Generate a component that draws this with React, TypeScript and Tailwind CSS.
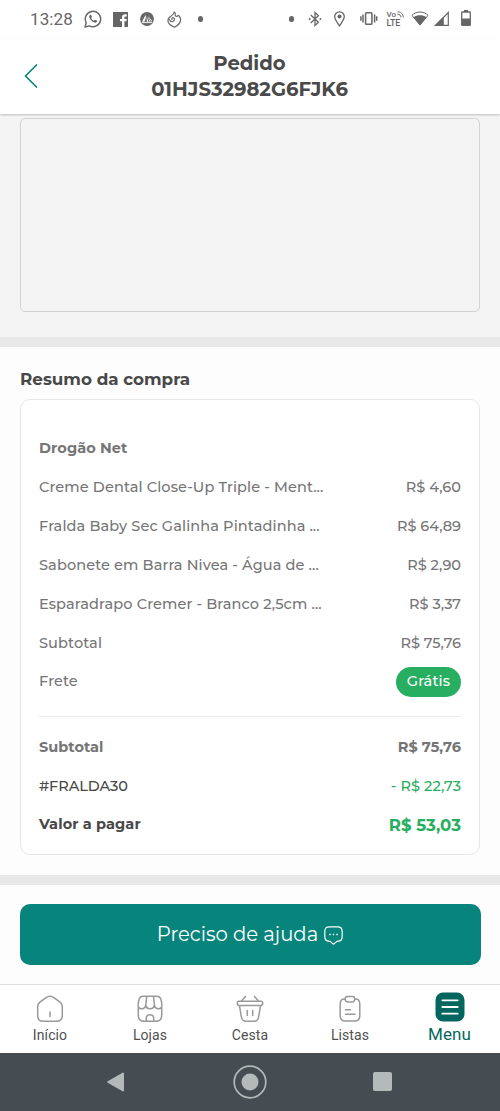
import type { ReactNode } from 'react';
import clsx from 'clsx';

interface OrderItem {
  name: string;
  price: string;
}

const items: OrderItem[] = [
  { name: 'Creme Dental Close-Up Triple - Ment...', price: 'R$ 4,60' },
  { name: 'Fralda Baby Sec Galinha Pintadinha ...', price: 'R$ 64,89' },
  { name: 'Sabonete em Barra Nivea - Água de ...', price: 'R$ 2,90' },
  { name: 'Esparadrapo Cremer - Branco 2,5cm ...', price: 'R$ 3,37' },
  { name: 'Subtotal', price: 'R$ 75,76' },
];

function Row({ children, className }: { children: ReactNode; className?: string }) {
  return (
    <div className={clsx('flex h-[38.85px] items-center justify-between whitespace-nowrap', className)}>
      {children}
    </div>
  );
}

function StatusBar() {
  return (
    <div className="flex h-[38px] shrink-0 items-center bg-white text-[#666]">
      <span className="ml-[30px] w-[43px] font-['Roboto'] text-[17px] leading-none tracking-[0.1px] whitespace-nowrap">13:28</span>
      {/* WhatsApp */}
      <svg className="ml-[11px]" width="18" height="18" viewBox="0 0 18 18" fill="none" stroke="currentColor" strokeWidth="1.4">
        <path d="M1 17l1.2-4.300A7.700 7.700 0 1 1 5.300 15.800z" strokeLinejoin="round" />
        <path d="M6.100 4.900c-.9.5-1.100 1.400-.7 2.600.8 2.400 2.600 4.200 5 5 1.200.4 2.200 0 2.600-.9.2-.5.1-.8-.3-1l-1.500-.7c-.3-.1-.5-.1-.7.2l-.6.7C8.700 10.300 7.600 9.200 7.100 8l.5-.6c.2-.3.3-.5.2-.8l-.7-1.500c-.2-.3-.5-.4-1-.2z" fill="currentColor" stroke="none" />
      </svg>
      {/* Facebook */}
      <svg className="ml-[10.5px]" width="15" height="15" viewBox="0 0 15 15">
        <path fill="currentColor" d="M0 0h15v15h-3.600V9.300h2l.3-2.300h-2.300V5.600c0-.7.3-1.100 1.200-1.100h1.200V2.400c-3.200-.5-4.800.6-4.800 2.900V7H7v2.300h2V15H0z" />
      </svg>
      {/* Tent badge */}
      <svg className="ml-[12.5px]" width="14" height="14" viewBox="0 0 14 14">
        <circle cx="7" cy="7" r="6.900" fill="currentColor" />
        <path d="M5.600 3L2 9.800h2.500L6 5.200zM6.600 4.500l.2 5.300h1.700zM7.200 3.500l2.300 6.300h1zM7.800 3.500l3.500 6h1.200z" fill="#fff" />
        <path d="M1.800 10.600h10.400" stroke="#fff" strokeWidth=".9" />
      </svg>
      {/* Flame */}
      <svg className="ml-[12.5px]" width="15" height="17" viewBox="0 0 15 17" fill="none" stroke="currentColor" strokeWidth="1.200" strokeLinecap="round" strokeLinejoin="round">
        <path d="M7.300 1C8 1.500 8.500 2.400 8.200 3.600 8 4.500 8.600 5.200 9.300 5.500c.8-.1 1.400-.6 1.800-1.200 1.800 1.300 2.800 3.400 2.400 5.700-.6 2.500-3.500 4.800-6 6.200C4.500 14.800.9 12.800.9 9.700c0-2.200 1-3.300 2.500-4.100C4.900 4.600 7.100 3.300 7.300 1z" />
        <path d="M2.400 8.500c.2 2 2.500 2.400 3.800 1.700 1.600-.9 1.700-2.900.4-3.400-1.200-.4-2.200.6-1.700 1.700" />
      </svg>
      <span className="ml-[16px] size-[5.5px] rounded-full bg-[#666]" />

      <span className="ml-[85.5px] size-[5.5px] rounded-full bg-[#666]" />
      {/* Bluetooth */}
      <svg className="ml-[14px]" width="14" height="16" viewBox="0 0 14 16" fill="none" stroke="currentColor" strokeWidth="1.300">
        <path d="M2.800 4l7.600 7.300L7 14.500v-13l3.400 3.200L2.800 12" />
        <circle cx="1.600" cy="8" r="1" fill="currentColor" stroke="none" />
        <circle cx="12.400" cy="8" r="1" fill="currentColor" stroke="none" />
      </svg>
      {/* Location pin */}
      <svg className="ml-[12px]" width="11" height="16" viewBox="0 0 11 16" fill="none" stroke="currentColor" strokeWidth="1.300">
        <path d="M5.500 14.800C3 11.500.7 8.300.7 5.600a4.800 4.800 0 0 1 9.600 0C10.300 8.300 8 11.500 5.500 14.800z" />
        <circle cx="5.500" cy="5.500" r="2" fill="currentColor" stroke="none" />
      </svg>
      {/* Vibrate */}
      <svg className="mb-[1px] ml-[14.5px]" width="18" height="13" viewBox="0 0 18 13" fill="none" stroke="currentColor" strokeWidth="1.500">
        <rect x="5.600" y=".8" width="6.300" height="11.400" rx=".8" />
        <path d="M3 2.500v8M14.600 2.500v8M.9 4.300v4.400M16.700 4.300v4.400" />
      </svg>
      {/* VoLTE */}
      <div className="relative ml-[9px] h-[16px] w-[18px] font-['Roboto'] font-medium">
        <div className="text-[8px] leading-[7px]">Vo</div>
        <div className="text-[9px] leading-[10px] tracking-[-0.2px]">LTE</div>
        <svg className="absolute top-0 left-[10.5px]" width="7" height="7" viewBox="0 0 7 7" fill="none" stroke="currentColor">
          <path d="M.5 1C3.500.5 6.500 3 6.300 6.500M.5 3.300c2-.2 3.600 1.200 3.500 3.200" />
        </svg>
      </div>
      {/* Wifi */}
      <svg className="mb-[1px] ml-[6px]" width="18" height="15" viewBox="0 0 18 15">
        <path d="M9 14L.9 4.300C5.500-.1 12.500-.1 17.100 4.300z" fill="none" stroke="currentColor" strokeWidth="1" />
        <path d="M9 14.500L2.600 6.200c3.700-2.500 9.100-2.500 12.800 0z" fill="currentColor" />
      </svg>
      {/* Signal */}
      <svg className="mb-[1px] ml-[5.5px]" width="15" height="15" viewBox="0 0 15 15">
        <path d="M14.300 1.500v12.800H1.700z" fill="none" stroke="currentColor" strokeWidth="1.200" />
        <path d="M0 15L9.800 5.200V15z" fill="currentColor" />
      </svg>
      {/* Battery */}
      <svg className="mb-[2px] ml-[11.5px]" width="10" height="16" viewBox="0 0 10 16">
        <path d="M3 0h4v2H3z" fill="currentColor" />
        <rect x=".7" y="2" width="8.600" height="13.300" rx=".6" fill="none" stroke="currentColor" strokeWidth="1.300" />
        <path d="M1 8.500h8V15H1z" fill="currentColor" />
      </svg>
    </div>
  );
}

function Header() {
  return (
    <header className="relative z-10 flex h-[76px] shrink-0 items-center bg-white pl-[24px] shadow-[0_1px_2px_rgba(0,0,0,0.22)]">
      <svg className="text-[#07857b]" width="14" height="24" viewBox="0 0 14 24" fill="none" stroke="currentColor" strokeWidth="1.700" strokeLinecap="round" strokeLinejoin="round">
        <path d="M12.500 1L1.500 12l11 11" />
      </svg>
      <h1 className="mr-[39px] flex-1 text-center text-[19.6px] leading-[26px] font-bold text-[#4a4a4a]">
        <span className="block">Pedido</span>
        <span className="block">01HJS32982G6FJK6</span>
      </h1>
    </header>
  );
}

function OrderSummary() {
  return (
    <section className="h-[528px] shrink-0 bg-[#fdfdfd] px-[20px] pt-[19px]">
      <h2 className="h-[26px] text-[16.75px] leading-[26px] font-bold text-[#484848]">Resumo da compra</h2>
      <div className="mt-[7px] h-[456px] rounded-[10px] border-[1.5px] border-[#e6e6e6] bg-white px-[18px] pt-[29.8px] text-[14.5px] font-medium text-[#757575]">
        <Row className="font-bold tracking-[0.1px]">
          <span>Drogão Net</span>
        </Row>
        {items.map((item) => (
          <Row key={item.name}>
            <span className="tracking-[0.12px]">{item.name}</span>
            <span>{item.price}</span>
          </Row>
        ))}
        <Row>
          <span className="tracking-[0.1px]">Frete</span>
          <span className="flex h-[30px] w-[65px] items-center justify-center rounded-full bg-[#27ae60] tracking-[0.15px] text-white">
            Grátis
          </span>
        </Row>
        <div className="mt-[14px] mb-[11.5px] h-px bg-[#ececec]" />
        <Row className="font-bold">
          <span className="tracking-[0.05px]">Subtotal</span>
          <span className="tracking-[0.05px]">R$ 75,76</span>
        </Row>
        <Row>
          <span className="tracking-[-0.1px] text-[#484848]">#FRALDA30</span>
          <span className="tracking-[0.05px] text-[#27ae60]">- R$ 22,73</span>
        </Row>
        <Row className="font-bold text-[#484848]">
          <span className="tracking-[0.1px]">Valor a pagar</span>
          <span className="text-[16.6px] text-[#27ae60]">R$ 53,03</span>
        </Row>
      </div>
    </section>
  );
}

function HelpButton() {
  return (
    <div className="h-[99px] shrink-0 bg-[#fdfdfd] px-[19.5px] pt-[19px]">
      <button className="flex h-[61px] w-full items-center justify-center gap-[6px] rounded-[10px] bg-[#07847b] pt-[1px] text-[19.6px] text-white">
        <span className="whitespace-nowrap">Preciso de ajuda</span>
        <svg width="19" height="19" viewBox="0 0 19 19" fill="none" stroke="currentColor" strokeWidth="1.200" strokeLinejoin="round">
          <path d="M5.500.8h8c3.300 0 4.700 1.500 4.700 4.700v5c0 3.200-1.300 4.600-4.200 4.700-.8 0-1.300.2-1.800.7l-1.900 1.700c-.5.5-1.100.5-1.600 0l-1.900-1.700c-.5-.5-1-.7-1.800-.7C2.100 15.100.8 13.700.8 10.500v-5C.8 2.300 2.200.8 5.500.8z" />
          <path d="M5.300 8.500h1.400M8.800 8.500h1.400M12.300 8.500h1.400" strokeWidth="1.500" />
        </svg>
      </button>
    </div>
  );
}

function NavItem({ label, children }: { label: string; children: ReactNode }) {
  return (
    <a className="flex w-[100px] flex-col items-center pt-[10px]">
      <svg width="28" height="28" viewBox="0 0 28 28" fill="none" stroke="#999" strokeWidth="1.500" strokeLinecap="round" strokeLinejoin="round">
        {children}
      </svg>
      <span className="mt-[4px] text-[14px] leading-[17px] tracking-[0.1px] text-[#505050]">{label}</span>
    </a>
  );
}

function BottomNav() {
  return (
    <nav className="flex h-[68.5px] shrink-0 border-t border-[#dcdcdc] bg-white font-['Roboto']">
      <NavItem label="Início">
        <path d="M1.700 12c0-2.500.6-3.600 2.200-4.800l6.200-4.500c2.500-1.900 5.300-1.900 7.800 0l6.200 4.500c1.600 1.200 2.200 2.300 2.200 4.800v8.300c0 4.300-1.600 6-6 6H7.700c-4.400 0-6-1.700-6-6z" />
        <path d="M14 17v4.500" />
      </NavItem>
      <NavItem label="Lojas">
        <path d="M2.300 12.500v7.800c0 4.300 1.700 6 6 6h11.400c4.300 0 6-1.700 6-6v-7.800" />
        <path d="M7.500 1.300h13c3.300 0 4.300 1.200 4.800 4.500l.6 3.500c.4 2.600-1 4.400-3.400 4.400-2.300 0-3.900-1.500-4.100-3.800-.2 2.300-1.900 3.800-4.200 3.800-2.400 0-4.300-1.500-4.400-3.800-.2 2.300-1.900 3.800-4.200 3.800-2.400 0-3.900-1.800-3.500-4.400l.6-3.500C3.200 2.500 4.200 1.300 7.500 1.300zM10.700 1.500l-.9 8.400M17.500 1.500l.9 8.400" />
        <path d="M10.300 26.200v-2.900c0-2.500 1.200-3.500 3.700-3.500s3.700 1 3.700 3.500v2.900" />
      </NavItem>
      <NavItem label="Cesta">
        <path d="M3 6.300h22c1.300 0 1.700.7 1.700 2s-.4 2.200-1.700 2.200H3c-1.300 0-1.700-.9-1.700-2.200s.4-2 1.700-2zM9.500 1.500L5.700 5.700M18.500 1.500l3.800 4.200" />
        <path d="M3.500 10.800l1.900 11.300c.5 3 1.800 4.200 4.700 4.200h7.800c2.900 0 4.200-1.200 4.700-4.200l1.900-11.300M11.300 15.500v5M16.700 15.500v5" />
      </NavItem>
      <NavItem label="Listas">
        <path d="M9 4H8.500C5.300 4 4.200 5.500 4.200 9v11.500c0 4 1.300 5.500 4.900 5.500h9.800c3.600 0 4.900-1.500 4.900-5.500V9c0-3.500-1.100-5-4.300-5H19" />
        <rect x="9.300" y="1.500" width="9.400" height="5.400" rx="2.300" />
        <path d="M9.500 14.700h5M9.500 19.300h9.500" />
      </NavItem>
      <a className="flex w-[100px] flex-col items-center pt-[6.5px] text-[#04675f]">
        <svg width="30" height="30" viewBox="0 0 30 30">
          <rect x=".5" y=".5" width="29" height="29" rx="7.500" fill="currentColor" />
          <path d="M7.300 8.300h15.400M7.300 15h15.400M7.300 21.700h15.400" stroke="#fff" strokeWidth="1.800" strokeLinecap="round" />
        </svg>
        <span className="mt-[2.5px] mr-[1px] text-[17px] leading-[20px] tracking-[0.1px]">Menu</span>
      </a>
    </nav>
  );
}

function SystemNav() {
  return (
    <div className="flex h-[59px] shrink-0 items-center bg-[#454d52] pb-[1px] text-[#b4b9ba]">
      <svg className="ml-[106px]" width="20" height="22" viewBox="0 0 20 22">
        <path d="M2.200 11L17 2.500v17z" fill="currentColor" stroke="currentColor" strokeWidth="2" strokeLinejoin="round" />
      </svg>
      <svg className="ml-[107px]" width="34" height="34" viewBox="0 0 34 34">
        <circle cx="17" cy="17" r="15.800" fill="none" stroke="currentColor" strokeWidth="1.700" />
        <circle cx="17" cy="17" r="8.500" fill="currentColor" />
      </svg>
      <span className="ml-[106px] size-[19px] rounded-[2px] bg-[#b4b9ba]" />
    </div>
  );
}

export default function App() {
  return (
    <div className="flex h-[1111px] w-[500px] flex-col overflow-hidden bg-[#454d52] font-['Montserrat','Inter',sans-serif]">
      <StatusBar />
      <Header />
      <div className="h-[223px] shrink-0 bg-[#f4f4f4] px-[20px] pt-[4px]">
        <div className="h-[194px] rounded-[5px] border-[1.5px] border-[#d3d3d3]" />
      </div>
      <div className="h-[10px] shrink-0 bg-[#e8e8e8]" />
      <OrderSummary />
      <div className="h-[10px] shrink-0 bg-[#e8e8e8]" />
      <HelpButton />
      <BottomNav />
      <SystemNav />
    </div>
  );
}
